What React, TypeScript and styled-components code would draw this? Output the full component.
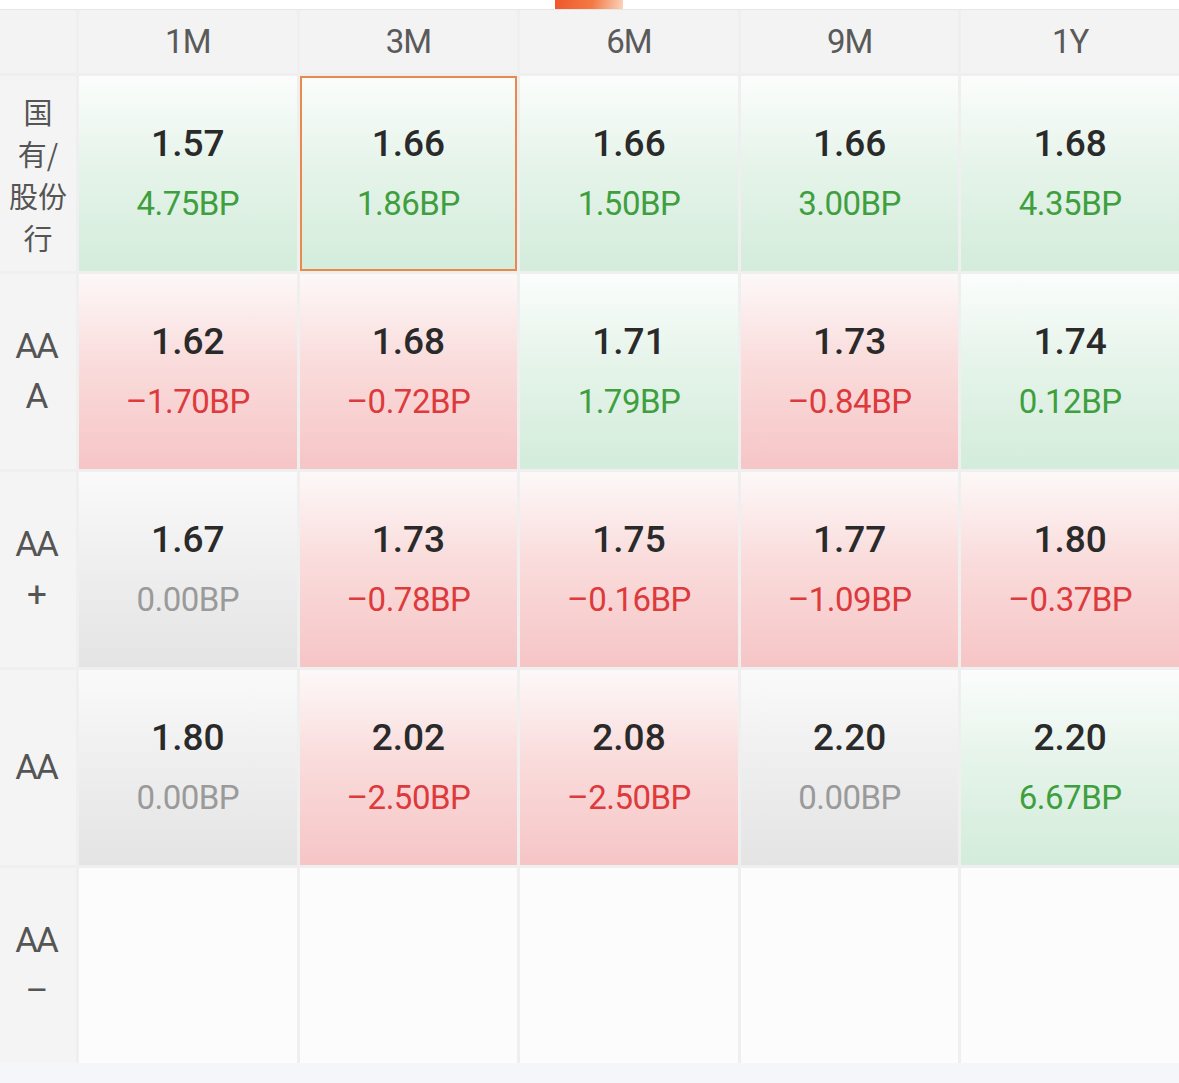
import React from "react";
import styled, { createGlobalStyle, css } from "styled-components";

const GlobalStyle = createGlobalStyle`
  html, body { margin: 0; padding: 0; background: #ffffff; }
  body { font-family: Roboto, "Noto Sans CJK SC", sans-serif; }
  * { box-sizing: border-box; }
`;

type Trend = "up" | "down" | "flat" | "empty";

const Page = styled.div`
  width: 1179px;
  height: 1083px;
  display: flex;
  flex-direction: column;
  background: #f5f6f9;
  overflow: hidden;
`;

const TopBar = styled.div`
  height: 10px;
  flex: none;
  background: #ffffff;
  border-bottom: 1px solid #e6e6e6;
  display: flex;
  justify-content: center;
`;

const Tab = styled.div`
  width: 68px;
  height: 9px;
  background: linear-gradient(100deg, #f0572a 0%, #f47a45 55%, #fbd3bd 100%);
  margin-left: -2px;
`;

const Grid = styled.div`
  display: grid;
  grid-template-columns: 76px repeat(5, 1fr);
  grid-template-rows: 63px repeat(5, 195px);
  gap: 3px 3px;
  background: #efefef;
  flex: none;
`;

const Corner = styled.div`
  background: #f3f3f3;
`;

const HeadCell = styled.div`
  background: #f3f3f3;
  display: flex;
  align-items: center;
  justify-content: center;
  font-family: Roboto, sans-serif;
  font-weight: 400;
  font-size: 33px;
  letter-spacing: -1px;
  color: #5a5a5a;
`;

const RowLabel = styled.div`
  background: #f4f4f4;
  display: flex;
  flex-direction: column;
  align-items: center;
  justify-content: center;
  color: #555555;
`;

const LabelLine = styled.span<{ $cjk?: boolean }>`
  display: block;
  text-align: center;
  white-space: nowrap;
  ${(p) =>
    p.$cjk
      ? css`
          font-family: "Noto Sans CJK SC", sans-serif;
          font-size: 29px;
          line-height: 42px;
        `
      : css`
          font-family: Roboto, sans-serif;
          font-weight: 400;
          font-size: 35px;
          line-height: 50px;
          letter-spacing: -2px;
          margin-left: -4px;
        `}
`;

const gradients: Record<Trend, string> = {
  up: "linear-gradient(180deg, #fbfdfc 0%, #e6f4ea 45%, #d3ecdb 100%)",
  down: "linear-gradient(180deg, #fdf8f8 0%, #fadcdc 45%, #f6c5c6 100%)",
  flat: "linear-gradient(180deg, #fafafa 0%, #efefef 45%, #e4e4e4 100%)",
  empty: "#fcfcfc",
};

const changeColors: Record<Trend, string> = {
  up: "#3f9f3f",
  down: "#dd3a3c",
  flat: "#9a9a9a",
  empty: "#9a9a9a",
};

const Cell = styled.div<{ $trend: Trend; $selected?: boolean }>`
  background: ${(p) => gradients[p.$trend]};
  display: flex;
  flex-direction: column;
  align-items: center;
  justify-content: center;
  ${(p) =>
    p.$selected &&
    css`
      box-shadow: inset 0 0 0 2px #e8894d;
    `}
`;

const Value = styled.span`
  font-family: Roboto, sans-serif;
  font-weight: 500;
  font-size: 37px;
  line-height: 60px;
  color: #2a2a2a;
`;

const Change = styled.span<{ $trend: Trend }>`
  font-family: Roboto, sans-serif;
  font-weight: 400;
  font-size: 33px;
  letter-spacing: -0.5px;
  line-height: 60px;
  color: ${(p) => changeColors[p.$trend]};
`;

const BottomStrip = styled.div`
  flex: 1;
  background: #f5f6f9;
`;

type Datum = { v: string; c: string; t: Trend; sel?: boolean } | null;

const headers = ["1M", "3M", "6M", "9M", "1Y"];

const rows: { label: string[]; cjk?: boolean; data: Datum[] }[] = [
  {
    label: ["国", "有/", "股份", "行"],
    cjk: true,
    data: [
      { v: "1.57", c: "4.75BP", t: "up" },
      { v: "1.66", c: "1.86BP", t: "up", sel: true },
      { v: "1.66", c: "1.50BP", t: "up" },
      { v: "1.66", c: "3.00BP", t: "up" },
      { v: "1.68", c: "4.35BP", t: "up" },
    ],
  },
  {
    label: ["AA", "A"],
    data: [
      { v: "1.62", c: "–1.70BP", t: "down" },
      { v: "1.68", c: "–0.72BP", t: "down" },
      { v: "1.71", c: "1.79BP", t: "up" },
      { v: "1.73", c: "–0.84BP", t: "down" },
      { v: "1.74", c: "0.12BP", t: "up" },
    ],
  },
  {
    label: ["AA", "+"],
    data: [
      { v: "1.67", c: "0.00BP", t: "flat" },
      { v: "1.73", c: "–0.78BP", t: "down" },
      { v: "1.75", c: "–0.16BP", t: "down" },
      { v: "1.77", c: "–1.09BP", t: "down" },
      { v: "1.80", c: "–0.37BP", t: "down" },
    ],
  },
  {
    label: ["AA"],
    data: [
      { v: "1.80", c: "0.00BP", t: "flat" },
      { v: "2.02", c: "–2.50BP", t: "down" },
      { v: "2.08", c: "–2.50BP", t: "down" },
      { v: "2.20", c: "0.00BP", t: "flat" },
      { v: "2.20", c: "6.67BP", t: "up" },
    ],
  },
  {
    label: ["AA", "–"],
    data: [null, null, null, null, null],
  },
];

export default function App() {
  return (
    <>
      <GlobalStyle />
      <Page>
        <TopBar>
          <Tab />
        </TopBar>
        <Grid>
          <Corner />
          {headers.map((h) => (
            <HeadCell key={h}>{h}</HeadCell>
          ))}
          {rows.map((row, ri) => (
            <React.Fragment key={ri}>
              <RowLabel>
                {row.label.map((l, li) => (
                  <LabelLine key={li} $cjk={row.cjk}>
                    {l}
                  </LabelLine>
                ))}
              </RowLabel>
              {row.data.map((d, ci) =>
                d ? (
                  <Cell key={ci} $trend={d.t} $selected={d.sel}>
                    <Value>{d.v}</Value>
                    <Change $trend={d.t}>{d.c}</Change>
                  </Cell>
                ) : (
                  <Cell key={ci} $trend="empty" />
                )
              )}
            </React.Fragment>
          ))}
        </Grid>
        <BottomStrip />
      </Page>
    </>
  );
}
